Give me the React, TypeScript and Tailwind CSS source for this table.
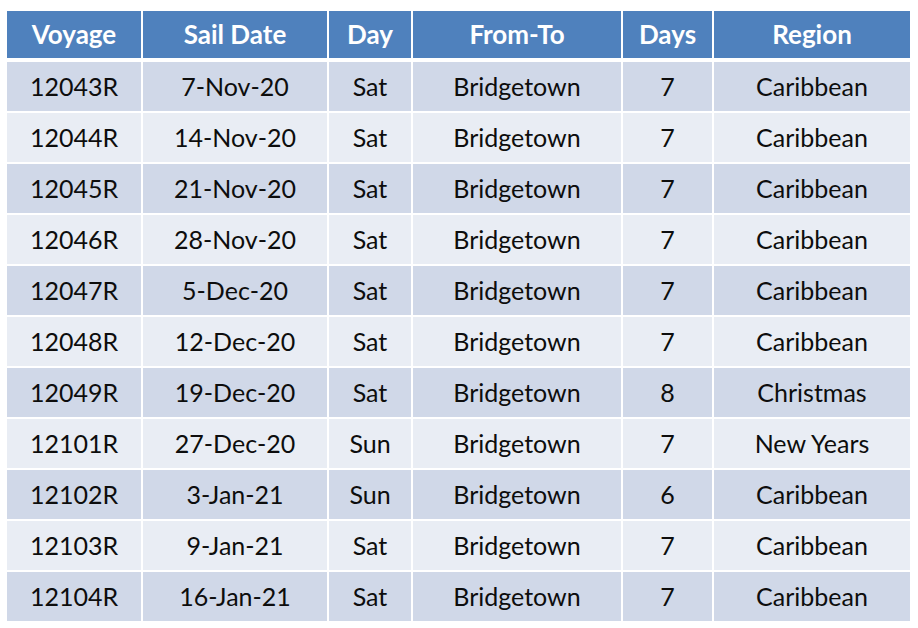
import React from 'react';

const rows = [
  ['12043R', '7-Nov-20', 'Sat', 'Bridgetown', '7', 'Caribbean'],
  ['12044R', '14-Nov-20', 'Sat', 'Bridgetown', '7', 'Caribbean'],
  ['12045R', '21-Nov-20', 'Sat', 'Bridgetown', '7', 'Caribbean'],
  ['12046R', '28-Nov-20', 'Sat', 'Bridgetown', '7', 'Caribbean'],
  ['12047R', '5-Dec-20', 'Sat', 'Bridgetown', '7', 'Caribbean'],
  ['12048R', '12-Dec-20', 'Sat', 'Bridgetown', '7', 'Caribbean'],
  ['12049R', '19-Dec-20', 'Sat', 'Bridgetown', '8', 'Christmas'],
  ['12101R', '27-Dec-20', 'Sun', 'Bridgetown', '7', 'New Years'],
  ['12102R', '3-Jan-21', 'Sun', 'Bridgetown', '6', 'Caribbean'],
  ['12103R', '9-Jan-21', 'Sat', 'Bridgetown', '7', 'Caribbean'],
  ['12104R', '16-Jan-21', 'Sat', 'Bridgetown', '7', 'Caribbean'],
];

const headers = ['Voyage', 'Sail Date', 'Day', 'From-To', 'Days', 'Region'];

export default function App() {
  return (
    <div className="w-[918px] h-[628px] bg-white pl-[7px] pt-[11px]" style={{ fontFamily: 'Lato, "Open Sans", sans-serif' }}>
      <div className="grid grid-cols-[134px_184px_82px_208px_89px_196px] w-fit gap-[2px] bg-white">
        {headers.map((h) => (
          <div key={h} className="h-[47px] mb-[2px] bg-[#4f81bd] text-white font-bold text-[26px] flex items-center justify-center">
            {h}
          </div>
        ))}
        {rows.map((r, i) =>
          r.map((c, j) => (
            <div
              key={`${i}-${j}`}
              className={`h-[49px] flex items-center justify-center text-[25px] text-[#0d0d0d] ${i % 2 === 0 ? 'bg-[#d0d8e8]' : 'bg-[#e9edf4]'}`}
            >
              {c}
            </div>
          ))
        )}
      </div>
    </div>
  );
}
